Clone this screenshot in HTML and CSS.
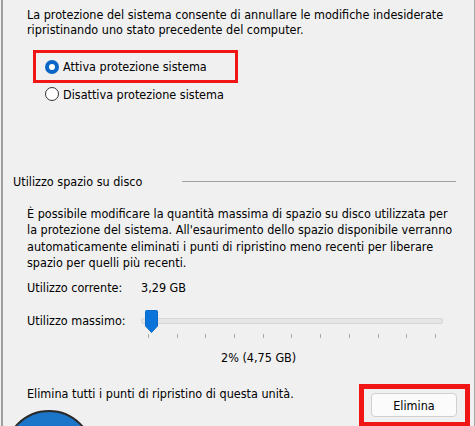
FILE: index.html
```html
<!DOCTYPE html>
<html lang="it">
<head>
<meta charset="utf-8">
<title>Protezione sistema</title>
<link rel="stylesheet" href="styles.css">
</head>
<body>
<div class="window">
  <p class="intro">La protezione del sistema consente di annullare le modifiche indesiderate<br>ripristinando uno stato precedente del computer.</p>

  <div class="radios">
    <label class="radio-row highlight">
      <span class="radio checked"></span>
      <span>Attiva protezione sistema</span>
    </label>
    <label class="radio-row plain">
      <span class="radio"></span>
      <span>Disattiva protezione sistema</span>
    </label>
  </div>

  <div class="group-head">
    <span class="group-title">Utilizzo spazio su disco</span>
    <span class="group-rule"></span>
  </div>

  <p class="desc">È possibile modificare la quantità massima di spazio su disco utilizzata per<br>la protezione del sistema. All'esaurimento dello spazio disponibile verranno<br>automaticamente eliminati i punti di ripristino meno recenti per liberare<br>spazio per quelli più recenti.</p>

  <div class="usage-row">
    <span class="usage-label">Utilizzo corrente:</span>
    <span>3,29 GB</span>
  </div>

  <div class="usage-row max-row">
    <span class="usage-label max-label">Utilizzo massimo:</span>
    <div class="slider">
      <div class="track"></div>
      <svg class="thumb" width="13" height="23" viewBox="0 0 13 23"><path d="M0.5 1.5 Q0.5 0.5 1.5 0.5 H11.5 Q12.5 0.5 12.5 1.5 V16 L6.5 22.5 L0.5 16 Z" fill="#0a74da" stroke="#0a6acb" stroke-width="1"/></svg>
      <div class="ticks">
        <i></i><i></i><i></i><i></i><i></i><i></i><i></i><i></i><i></i><i></i><i></i>
      </div>
    </div>
  </div>

  <div class="percent">2% (4,75 GB)</div>

  <div class="delete-row">
    <span class="delete-text">Elimina tutti i punti di ripristino di questa unità.</span>
    <div class="btn-frame"><button class="btn">Elimina</button></div>
  </div>

  <div class="blue-circle"></div>
</div>
</body>
</html>
```

FILE: styles.css
```css
html, body {
  margin: 0;
  padding: 0;
  background: #f0f0f0;
}
body {
  font-family: "DejaVu Sans Condensed", "DejaVu Sans", sans-serif;
  font-size: 12.5px;
  color: #000;
}
.window {
  position: relative;
  box-sizing: border-box;
  width: 474px;
  height: 426px;
  margin-left: 1px;
  border-left: 2px solid #9e9e9e;
  border-right: 1px solid #a8a8a8;
  background: #f0f0f0;
  overflow: hidden;
}
.intro {
  margin: 0;
  padding: 7px 0 0 24px;
  line-height: 15px;
}
.radios {
  display: flex;
  flex-direction: column;
  margin: 13px 0 0 30px;
}
.radio-row {
  display: flex;
  align-items: center;
  gap: 4px;
}
.radio-row.highlight {
  width: 190px;
  height: 27px;
  border: 3px solid #f01616;
  padding-left: 9px;
}
.radio-row.plain {
  height: 22px;
  padding-left: 12px;
}
.radio {
  box-sizing: border-box;
  width: 14px;
  height: 14px;
  border-radius: 50%;
  border: 1px solid #333;
  background: #fff;
  flex: none;
}
.radio.checked {
  border: 4px solid #0a67c8;
  background: #fff;
}
.group-head {
  display: flex;
  align-items: center;
  margin-top: 69px;
  padding-left: 10px;
  line-height: 16px;
}
.group-rule {
  margin-left: auto;
  margin-right: 18px;
  width: 274px;
  height: 1px;
  background: #a0a0a0;
  position: relative;
  top: -1px;
}
.desc {
  margin: 16px 0 0 24px;
  line-height: 16.3px;
}
.usage-row {
  display: flex;
  align-items: flex-start;
  margin-left: 24px;
  margin-top: 9px;
  line-height: 16px;
}
.usage-label {
  width: 114px;
}
.max-row {
  margin-top: 13px;
}
.max-label {
  margin-top: 4px;
}
.slider {
  position: relative;
  width: 302px;
  height: 30px;
}
.track {
  position: absolute;
  left: 0;
  right: 0;
  top: 9px;
  height: 4px;
  background: #e6e6e6;
  border: 1px solid #d6d6d6;
  border-radius: 2px;
}
.thumb {
  position: absolute;
  left: 4px;
  top: 1px;
}
.ticks {
  position: absolute;
  left: 7px;
  right: 7px;
  top: 25px;
  display: flex;
  justify-content: space-between;
}
.ticks i {
  display: block;
  width: 1px;
  height: 4px;
  background: #a9a9a9;
}
.percent {
  margin: 11px 0 0 218px;
  line-height: 16px;
}
.delete-row {
  display: flex;
  justify-content: space-between;
  align-items: flex-start;
  margin: 18px 4px 0 24px;
}
.delete-text {
  margin-top: 2px;
  line-height: 16px;
}
.btn-frame {
  box-sizing: border-box;
  width: 111px;
  height: 43px;
  border: 5px solid #f01616;
  padding: 4px 8px 0 7px;
}
.btn {
  display: block;
  box-sizing: border-box;
  width: 86px;
  height: 24px;
  border: 1px solid #d0d0d0;
  border-radius: 4px;
  background: #fbfbfb;
  font: inherit;
  color: #000;
  padding: 0;
}
.blue-circle {
  position: absolute;
  left: 1px;
  top: 410px;
  width: 90px;
  height: 90px;
  box-sizing: border-box;
  border-radius: 50%;
  background: #1b76c9;
  border: 2px solid #2a2a2a;
}
```
